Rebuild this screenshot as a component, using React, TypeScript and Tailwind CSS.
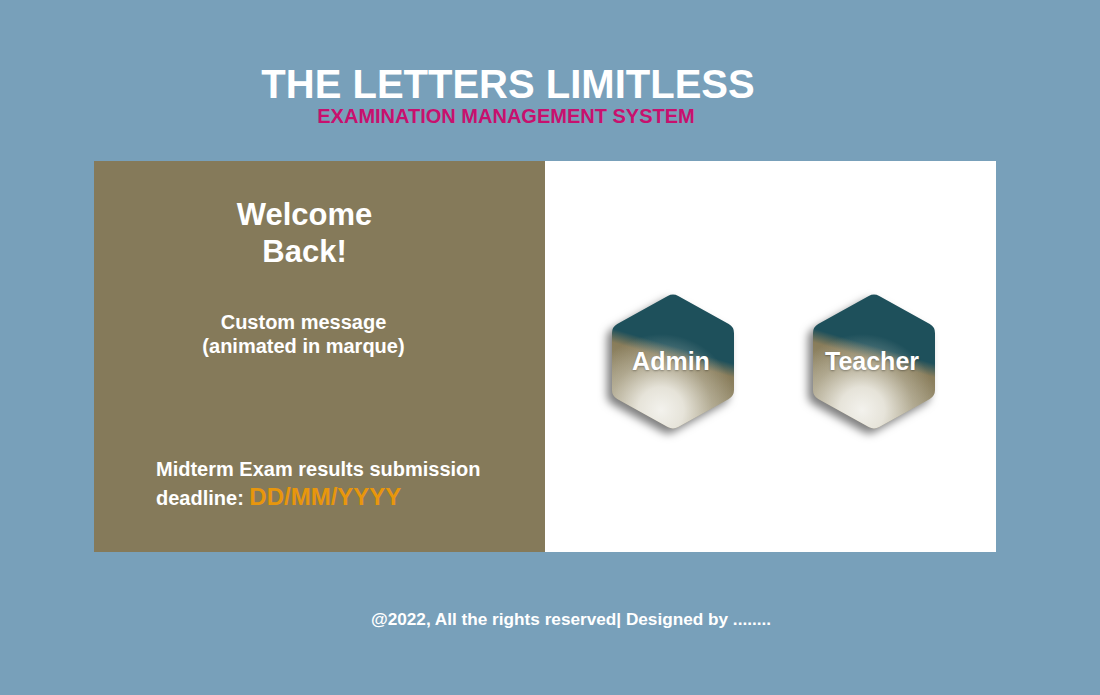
import React from "react";

type Pt = [number, number];

// hexagon corners, pointy top
const hexPoints: Pt[] = [
  [62, 1],
  [123, 35],
  [123, 104],
  [62, 138],
  [1, 104],
  [1, 35],
];

const roundedPath = (pts: Pt[], r: number) => {
  let d = "";
  pts.forEach((v, i) => {
    const p = pts[(i - 1 + pts.length) % pts.length];
    const n = pts[(i + 1) % pts.length];
    const lp = Math.hypot(p[0] - v[0], p[1] - v[1]);
    const ln = Math.hypot(n[0] - v[0], n[1] - v[1]);
    const a = [v[0] + ((p[0] - v[0]) * r) / lp, v[1] + ((p[1] - v[1]) * r) / lp];
    const b = [v[0] + ((n[0] - v[0]) * r) / ln, v[1] + ((n[1] - v[1]) * r) / ln];
    d += `${i === 0 ? "M" : "L"}${a[0].toFixed(2)},${a[1].toFixed(2)} `;
    d += `Q${v[0]},${v[1]} ${b[0].toFixed(2)},${b[1].toFixed(2)} `;
  });
  return d + "Z";
};

const hexPath = roundedPath(hexPoints, 6);

const HexButton = ({ label, id }: { label: string; id: string }) => {
  return (
    <div className="relative w-[124px] h-[139px] cursor-pointer">
      <svg
        width="124"
        height="139"
        viewBox="0 0 124 139"
        className="block [filter:drop-shadow(-5px_5px_4px_rgba(0,0,0,0.5))]"
      >
        <defs>
          <linearGradient
            id={`${id}-base`}
            gradientUnits="userSpaceOnUse"
            x1="67.6"
            y1="40.8"
            x2="34.1"
            y2="156"
          >
            <stop offset="0" stopColor="#1e505b" />
            <stop offset="0.12" stopColor="#1e505b" />
            <stop offset="0.23" stopColor="#887c5a" />
            <stop offset="0.6" stopColor="#a0977a" />
            <stop offset="1" stopColor="#aea58d" />
          </linearGradient>
          <radialGradient
            id={`${id}-glow`}
            gradientUnits="userSpaceOnUse"
            cx="50"
            cy="118"
            r="76"
          >
            <stop offset="0" stopColor="#f3f2ed" stopOpacity="1" />
            <stop offset="0.3" stopColor="#eeece4" stopOpacity="0.9" />
            <stop offset="0.68" stopColor="#e4e1d5" stopOpacity="0.32" />
            <stop offset="1" stopColor="#e4e1d5" stopOpacity="0" />
          </radialGradient>
        </defs>
        <path d={hexPath} fill={`url(#${id}-base)`} />
        <path d={hexPath} fill={`url(#${id}-glow)`} />
      </svg>
      {/* label sits over the hexagon */}
      <span className="absolute inset-0 flex items-center justify-center pr-[4px] pt-[1px] text-white font-bold text-[25px] [text-shadow:0_1px_2px_rgba(0,0,0,0.3)]">
        {label}
      </span>
    </div>
  );
};

const App = () => {
  return (
    <div className="w-full h-[695px] bg-[#78a0ba] [font-family:'Liberation_Sans',Arial,sans-serif] overflow-hidden">
      {/* Header */}
      <div className="h-[161px] pt-[64px] pr-[84px] flex flex-col items-center">
        <h1 className="text-white font-bold text-[40px] leading-[40px]">
          THE LETTERS LIMITLESS
        </h1>
        <h2 className="mt-[2px] mr-[4px] text-[#c8106e] font-bold text-[20px] leading-[20px]">
          EXAMINATION MANAGEMENT SYSTEM
        </h2>
      </div>

      {/* Main card */}
      <div className="ml-[94px] w-[902px] h-[391px] flex">
        <div className="w-[451px] h-full bg-[#857a5a] text-white font-bold">
          <div className="pt-[35px] pr-[30px] text-center text-[31px] leading-[37px]">
            Welcome
            <br />
            Back!
          </div>
          <div className="mt-[40px] pr-[32px] text-center text-[20px] leading-[24px]">
            Custom message
            <br />
            (animated in marque)
          </div>
          <div className="mt-[97px] pl-[62px] text-[20px] leading-[28px]">
            Midterm Exam results submission
            <br />
            deadline:{" "}
            <span className="text-[#e8960c] text-[24px]">DD/MM/YYYY</span>
          </div>
        </div>

        <div className="flex-1 h-full bg-white flex items-center justify-center gap-[77px] pt-[9px] pl-[6px]">
          <HexButton label="Admin" id="admin" />
          <HexButton label="Teacher" id="teacher" />
        </div>
      </div>

      {/* Footer */}
      <div className="mt-[57px] pl-[42px] text-center text-white font-bold text-[17.2px] leading-[20px]">
        @2022, All the rights reserved| Designed by ........
      </div>
    </div>
  );
};

export default App;
